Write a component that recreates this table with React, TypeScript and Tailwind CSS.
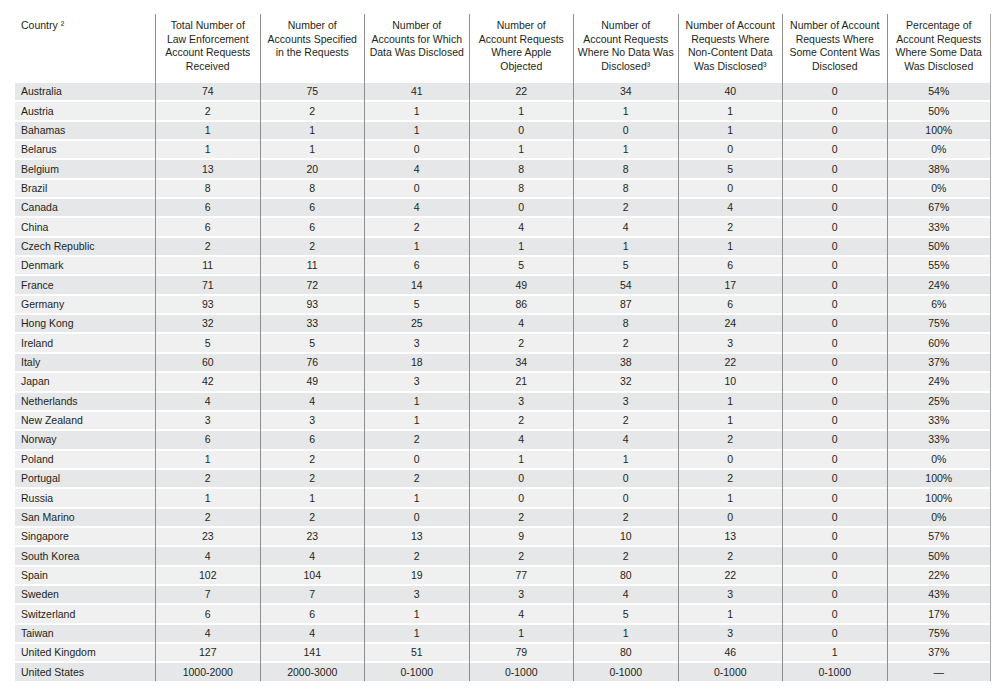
// Law enforcement account requests table, one row per country.
import { Fragment } from 'react';

type Row = [string, ...string[]];

const HEADERS: string[][] = [
  ['Total Number of', 'Law Enforcement', 'Account Requests', 'Received'],
  ['Number of', 'Accounts Specified', 'in the Requests'],
  ['Number of', 'Accounts for Which', 'Data Was Disclosed'],
  ['Number of', 'Account Requests', 'Where Apple', 'Objected'],
  ['Number of', 'Account Requests', 'Where No Data Was', 'Disclosed³'],
  ['Number of Account', 'Requests Where', 'Non-Content Data', 'Was Disclosed³'],
  ['Number of Account', 'Requests Where', 'Some Content Was', 'Disclosed'],
  ['Percentage of', 'Account Requests', 'Where Some Data', 'Was Disclosed'],
];

const ROWS: Row[] = [
  ['Australia', '74', '75', '41', '22', '34', '40', '0', '54%'],
  ['Austria', '2', '2', '1', '1', '1', '1', '0', '50%'],
  ['Bahamas', '1', '1', '1', '0', '0', '1', '0', '100%'],
  ['Belarus', '1', '1', '0', '1', '1', '0', '0', '0%'],
  ['Belgium', '13', '20', '4', '8', '8', '5', '0', '38%'],
  ['Brazil', '8', '8', '0', '8', '8', '0', '0', '0%'],
  ['Canada', '6', '6', '4', '0', '2', '4', '0', '67%'],
  ['China', '6', '6', '2', '4', '4', '2', '0', '33%'],
  ['Czech Republic', '2', '2', '1', '1', '1', '1', '0', '50%'],
  ['Denmark', '11', '11', '6', '5', '5', '6', '0', '55%'],
  ['France', '71', '72', '14', '49', '54', '17', '0', '24%'],
  ['Germany', '93', '93', '5', '86', '87', '6', '0', '6%'],
  ['Hong Kong', '32', '33', '25', '4', '8', '24', '0', '75%'],
  ['Ireland', '5', '5', '3', '2', '2', '3', '0', '60%'],
  ['Italy', '60', '76', '18', '34', '38', '22', '0', '37%'],
  ['Japan', '42', '49', '3', '21', '32', '10', '0', '24%'],
  ['Netherlands', '4', '4', '1', '3', '3', '1', '0', '25%'],
  ['New Zealand', '3', '3', '1', '2', '2', '1', '0', '33%'],
  ['Norway', '6', '6', '2', '4', '4', '2', '0', '33%'],
  ['Poland', '1', '2', '0', '1', '1', '0', '0', '0%'],
  ['Portugal', '2', '2', '2', '0', '0', '2', '0', '100%'],
  ['Russia', '1', '1', '1', '0', '0', '1', '0', '100%'],
  ['San Marino', '2', '2', '0', '2', '2', '0', '0', '0%'],
  ['Singapore', '23', '23', '13', '9', '10', '13', '0', '57%'],
  ['South Korea', '4', '4', '2', '2', '2', '2', '0', '50%'],
  ['Spain', '102', '104', '19', '77', '80', '22', '0', '22%'],
  ['Sweden', '7', '7', '3', '3', '4', '3', '0', '43%'],
  ['Switzerland', '6', '6', '1', '4', '5', '1', '0', '17%'],
  ['Taiwan', '4', '4', '1', '1', '1', '3', '0', '75%'],
  ['United Kingdom', '127', '141', '51', '79', '80', '46', '1', '37%'],
  ['United States', '1000-2000', '2000-3000', '0-1000', '0-1000', '0-1000', '0-1000', '0-1000', '—'],
];

export default function App() {
  return (
    <div className="w-[1000px] h-[690px] bg-white text-[#231f20] font-['Liberation_Sans',Arial,sans-serif] text-[10.5px]">
      <div className="ml-[15px] pt-[14px] grid grid-cols-[140px_repeat(8,104.5px)] grid-rows-[67px_repeat(31,19.35px)]">
        {/* header */}
        <div className="pl-[6px] pt-[5px] leading-[13.5px]">Country ²</div>
        {HEADERS.map((lines, i) => (
          <div
            key={i}
            className={`border-l border-[#8e8e8e] pt-[5px] leading-[13.5px] text-center ${
              i === HEADERS.length - 1 ? 'border-r border-r-[#a8a8a8]' : ''
            }`}
          >
            {lines.map((l) => (
              <div key={l} className="whitespace-nowrap">{l}</div>
            ))}
          </div>
        ))}

        {/* body */}
        {ROWS.map((row, r) => {
          const bg = r % 2 === 0 ? 'bg-[#e6e7e8]' : 'bg-[#f0f0f1]';
          return (
            <Fragment key={row[0]}>
              {row.map((v, c) => (
                <div
                  key={c}
                  className={`pt-[2px] ${c > 0 ? 'border-l border-[#8e8e8e]' : ''} ${
                    c === row.length - 1 ? 'border-r border-r-[#a8a8a8]' : ''
                  }`}
                >
                  <div
                    className={`h-full pt-[1px] flex items-center whitespace-nowrap ${bg} ${
                      c === 0 ? 'pl-[6px]' : 'justify-center'
                    }`}
                  >
                    {v}
                  </div>
                </div>
              ))}
            </Fragment>
          );
        })}
      </div>
    </div>
  );
}
